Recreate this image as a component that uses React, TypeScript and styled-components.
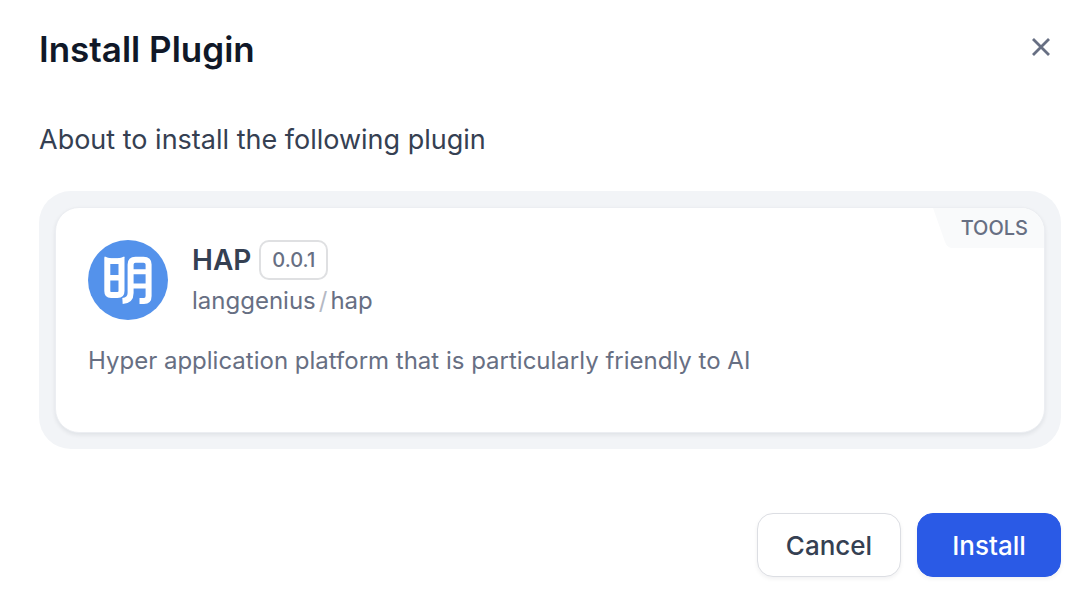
import styled, { createGlobalStyle } from "styled-components";

const GlobalStyle = createGlobalStyle`
  *, *::before, *::after { box-sizing: border-box; }
  body {
    margin: 0;
    background: #fff;
    font-family: Inter, "Liberation Sans", sans-serif;
    -webkit-font-smoothing: antialiased;
  }
  h1, h2, p { margin: 0; }
  button { font-family: inherit; cursor: pointer; }
`;

const Dialog = styled.main`
  display: flex;
  flex-direction: column;
  padding: 24px 25px 28px 39px;
`;

const Header = styled.header`
  display: flex;
  justify-content: space-between;
  align-items: flex-start;
`;

const Title = styled.h1`
  font-size: 35px;
  line-height: 50px;
  font-weight: 600;
  color: #101828;
`;

const CloseButton = styled.button`
  display: flex;
  padding: 8px;
  margin-top: 3px;
  border: 0;
  background: none;
  color: #676f83;
`;

const Intro = styled.p`
  margin-top: 45px;
  font-size: 27px;
  line-height: 42px;
  color: #354052;
`;

const Panel = styled.section`
  margin-top: 30px;
  padding: 16px;
  border-radius: 32px;
  background: #f2f4f7;
`;

const Card = styled.article`
  display: flex;
  flex-direction: column;
  min-height: 226px;
  padding: 32px;
  position: relative;
  overflow: hidden;
  border: 1px solid #eceef2;
  border-radius: 24px;
  background: #fff;
  box-shadow: 0 2px 4px rgba(16, 24, 40, 0.08);
`;

const CategoryTag = styled.div`
  display: flex;
  position: absolute;
  top: 0;
  right: 0;
  color: #f9fafb;
`;

const TagLabel = styled.span`
  padding: 0 16px 0 8px;
  background: #f9fafb;
  color: #676f83;
  font-size: 20px;
  line-height: 40px;
  font-weight: 500;
`;

const Plugin = styled.div`
  display: flex;
  gap: 24px;
`;

const NameRow = styled.div`
  display: flex;
  align-items: center;
  gap: 8px;
`;

const Name = styled.h2`
  font-size: 28px;
  line-height: 40px;
  font-weight: 600;
  color: #354052;
`;

const Version = styled.span`
  padding: 0 11px;
  border: 2px solid #dfe0e2;
  border-radius: 10px;
  font-size: 20px;
  line-height: 36px;
  font-weight: 500;
  color: #676f83;
`;

const Source = styled.p`
  display: flex;
  gap: 3px;
  font-size: 24px;
  line-height: 42px;
  color: #676f83;
`;

const Slash = styled.span`
  color: #b5b9c4;
`;

const Description = styled.p`
  margin-top: 23px;
  font-size: 24px;
  line-height: 32px;
  color: #676f83;
`;

const Actions = styled.footer`
  display: flex;
  justify-content: flex-end;
  gap: 16px;
  margin-top: 64px;
`;

const Button = styled.button<{ $primary?: boolean }>`
  min-width: 144px;
  height: 64px;
  padding: 0 24px;
  border: 1px solid ${(p) => (p.$primary ? "#2a5ae6" : "#dcdee3")};
  border-radius: 16px;
  background: ${(p) => (p.$primary ? "#2a5ae6" : "#fff")};
  color: ${(p) => (p.$primary ? "#fff" : "#354052")};
  font-size: 26px;
  font-weight: 500;
  box-shadow: 0 2px 4px rgba(16, 24, 40, 0.06);
`;

export default function App() {
  return (
    <>
      <GlobalStyle />
      <Dialog>
        <Header>
          <Title>Install Plugin</Title>
          <CloseButton type="button" aria-label="Close">
            <svg width="24" height="24" viewBox="0 0 24 24" fill="none" stroke="currentColor" strokeWidth="2.8">
              <path d="M4 4 20 20M20 4 4 20" />
            </svg>
          </CloseButton>
        </Header>
        <Intro>About to install the following plugin</Intro>
        <Panel>
          <Card>
            <CategoryTag>
              <svg width="20" height="40" viewBox="0 0 20 40" fill="currentColor" aria-hidden="true">
                <path d="M0 0H20V40Q14 40 12 34Z" />
              </svg>
              <TagLabel>TOOLS</TagLabel>
            </CategoryTag>
            <Plugin>
              <svg width="80" height="80" viewBox="0 0 80 80" fill="none" role="img" aria-label="HAP">
                <circle cx="40" cy="40" r="40" fill="#5492eb" />
                <g stroke="#fff" strokeWidth="6">
                  <path d="M19.300 18V51Q19.300 55 23 55H29.500Q33.500 55 33.500 51V18" />
                  <path d="M16.500 17.200Q20 19 23 19H30Q33 19 36.500 17.200" strokeWidth="1.500" />
                  <path d="M19 21.200H33M19 37.700H33" strokeWidth="5.4" />
                  <path d="M34.500 61Q42.600 60.500 42.600 53V24.500Q42.600 19.700 47.500 19.700H55.500Q60.600 19.700 60.600 24.500V56Q60.600 61 56 61H51.500" />
                  <path d="M43 31.800H60M43 46H60" strokeWidth="5" />
                </g>
              </svg>
              <div>
                <NameRow>
                  <Name>HAP</Name>
                  <Version>0.0.1</Version>
                </NameRow>
                <Source>
                  <span>langgenius</span>
                  <Slash>/</Slash>
                  <span>hap</span>
                </Source>
              </div>
            </Plugin>
            <Description>Hyper application platform that is particularly friendly to AI</Description>
          </Card>
        </Panel>
        <Actions>
          <Button type="button">Cancel</Button>
          <Button type="button" $primary>Install</Button>
        </Actions>
      </Dialog>
    </>
  );
}
